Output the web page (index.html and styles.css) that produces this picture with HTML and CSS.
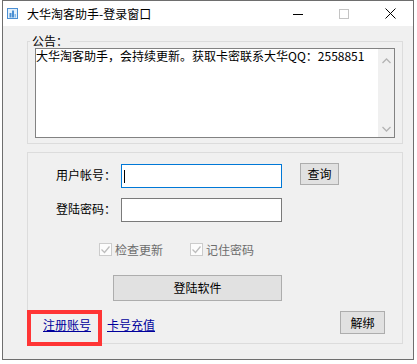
FILE: index.html
```html
<!DOCTYPE html>
<html lang="zh-CN">
<head>
<meta charset="utf-8">
<title>大华淘客助手-登录窗口</title>
<link rel="stylesheet" href="styles.css">
</head>
<body>
<div class="window">
  <div class="titlebar">
    <svg class="app-icon" width="11" height="11" viewBox="0 0 11 11">
      <rect x="0.5" y="0.5" width="10" height="10" fill="#e3f0fb" stroke="#4a8fd4"/>
      <rect x="2.5" y="5" width="2" height="4.5" fill="#4a8fd4"/>
      <rect x="5" y="2.5" width="2" height="7" fill="#4a8fd4"/>
      <rect x="7.5" y="6" width="1.5" height="3.5" fill="#8bbbe8"/>
    </svg>
    <span class="title">大华淘客助手-登录窗口</span>
    <div class="caption-btns">
      <span class="cbtn"><svg width="10" height="10" viewBox="0 0 10 10"><line x1="0" y1="5.5" x2="10" y2="5.5" stroke="#000" stroke-width="1"/></svg></span>
      <span class="cbtn"><svg width="10" height="10" viewBox="0 0 10 10"><rect x="0.5" y="0.5" width="9" height="9" fill="none" stroke="#c4c4c4" stroke-width="1"/></svg></span>
      <span class="cbtn"><svg width="11" height="11" viewBox="0 0 11 11"><path d="M0.5 0.5 L10.5 10.5 M10.5 0.5 L0.5 10.5" stroke="#000" stroke-width="1"/></svg></span>
    </div>
  </div>
  <div class="client">
    <fieldset class="group notice">
      <legend>公告：</legend>
      <div class="memo">
        <div class="memo-text">大华淘客助手，会持续更新。获取卡密联系大华QQ：2558851</div>
        <div class="vscroll">
          <svg class="arrow-up" width="9" height="6" viewBox="0 0 9 6"><path d="M0.5 5 L4.5 1 L8.5 5" fill="none" stroke="#b4b4b4" stroke-width="1.3"/></svg>
          <svg class="arrow-down" width="9" height="6" viewBox="0 0 9 6"><path d="M0.5 1 L4.5 5 L8.5 1" fill="none" stroke="#b4b4b4" stroke-width="1.3"/></svg>
        </div>
      </div>
    </fieldset>
    <div class="group login">
      <div class="row row-user">
        <span class="label">用户帐号：</span>
        <div class="edit focused"><span class="caret"></span></div>
        <button class="btn btn-query">查询</button>
      </div>
      <div class="row row-pass">
        <span class="label">登陆密码：</span>
        <div class="edit"></div>
      </div>
      <div class="checks">
        <span class="check"><span class="box"><svg width="11" height="11" viewBox="0 0 11 11"><path d="M1.5 5.5 L4.5 8.5 L9.5 2.5" fill="none" stroke="#bdbdbd" stroke-width="1.3"/></svg></span><span class="check-text">检查更新</span></span>
        <span class="check"><span class="box"><svg width="11" height="11" viewBox="0 0 11 11"><path d="M1.5 5.5 L4.5 8.5 L9.5 2.5" fill="none" stroke="#bdbdbd" stroke-width="1.3"/></svg></span><span class="check-text">记住密码</span></span>
      </div>
      <button class="btn btn-login">登陆软件</button>
      <div class="bottom">
        <a class="link link-reg" href="#">注册账号</a>
        <a class="link link-pay" href="#">卡号充值</a>
        <button class="btn btn-unbind">解绑</button>
      </div>
    </div>
  </div>
  <div class="highlight"></div>
</div>
</body>
</html>
```

FILE: styles.css
```css
html, body {
  margin: 0;
  padding: 0;
  background: #ffffff;
}
body {
  font-family: "Noto Sans CJK SC", "Microsoft YaHei", sans-serif;
  font-size: 12px;
  color: #000;
}
.window {
  position: relative;
  margin-left: 2px;
  width: 412px;
  height: 360px;
  box-sizing: border-box;
  border: 1px solid #6e6e6e;
  background: #f0f0f0;
  display: flex;
  flex-direction: column;
}
.titlebar {
  flex: none;
  height: 25px;
  background: #ffffff;
  display: flex;
  align-items: center;
}
.app-icon {
  margin-left: 4px;
  flex: none;
}
.title {
  margin-left: 9px;
  line-height: 16px;
}
.caption-btns {
  margin-left: auto;
  display: flex;
  height: 100%;
}
.cbtn {
  width: 46px;
  display: flex;
  align-items: center;
  justify-content: center;
}
.client {
  flex: 1;
  padding: 0 10px 0 24px;
  display: flex;
  flex-direction: column;
}
.notice {
  margin: 8px 0 0 0;
  padding: 0 7px 5px 7px;
  border: 1px solid #dcdcdc;
  min-width: 0;
}
.notice legend {
  padding: 0 2px;
  margin-left: -5px;
  line-height: 14px;
}
.memo {
  height: 90px;
  box-sizing: border-box;
  border: 1px solid #828282;
  background: #ffffff;
  display: flex;
}
.memo-text {
  flex: 1;
  padding: 0;
  line-height: 14px;
  white-space: nowrap;
}
.vscroll {
  width: 16px;
  background: #f0f0f0;
  display: flex;
  flex-direction: column;
  justify-content: space-between;
  align-items: center;
}
.arrow-up { margin-top: 9px; }
.arrow-down { margin-bottom: 5px; }

.login {
  margin-top: 8px;
  border: 1px solid #dcdcdc;
  padding: 10px 0 9px 0;
  display: flex;
  flex-direction: column;
}
.row {
  display: flex;
  align-items: flex-start;
}
.row-user { height: 25px; }
.row-pass { height: 24px; margin-top: 10px; }
.label {
  width: 93px;
  box-sizing: border-box;
  padding-left: 28px;
  line-height: 16px;
  flex: none;
}
.row-user .label { margin-top: 4px; }
.row-pass .label { margin-top: 3px; }
.edit {
  width: 161px;
  height: 24px;
  box-sizing: border-box;
  border: 1px solid #7a7a7a;
  background: #ffffff;
  flex: none;
  position: relative;
}
.row-user .edit { margin-top: 1px; }
.edit.focused { border-color: #0078d7; }
.caret {
  display: block;
  width: 1px;
  height: 13px;
  background: #000;
  margin: 5px 0 0 2px;
}
.btn {
  font-family: inherit;
  font-size: 12px;
  color: #000;
  background: #e1e1e1;
  border: 1px solid #adadad;
  padding: 0;
  margin: 0;
  box-sizing: border-box;
  line-height: 16px;
}
.btn-query {
  margin-left: 18px;
  width: 39px;
  height: 22px;
}
.checks {
  display: flex;
  height: 13px;
  margin-top: 21px;
  padding-left: 71px;
}
.check {
  display: flex;
  align-items: center;
  width: 91px;
}
.box {
  width: 13px;
  height: 13px;
  box-sizing: border-box;
  border: 1px solid #cccccc;
  background: #fcfcfc;
  display: flex;
  align-items: center;
  justify-content: center;
  flex: none;
}
.check-text {
  margin-left: 3px;
  color: #6d6d6d;
  line-height: 13px;
}
.btn-login {
  margin: 19px 0 0 85px;
  width: 169px;
  height: 26px;
  align-self: flex-start;
}
.bottom {
  display: flex;
  align-items: flex-start;
  height: 23px;
  margin-top: 10px;
}
.link {
  color: #00009c;
  text-decoration: underline;
  line-height: 16px;
  margin-top: 6px;
}
.link-reg { margin-left: 15px; }
.link-pay { margin-left: 16px; }
.btn-unbind {
  margin-left: auto;
  margin-right: 17px;
  width: 45px;
  height: 23px;
}
.highlight {
  position: absolute;
  left: 24px;
  top: 309px;
  width: 75px;
  height: 36px;
  box-sizing: border-box;
  border: 4px solid #ff3535;
  pointer-events: none;
}
```
